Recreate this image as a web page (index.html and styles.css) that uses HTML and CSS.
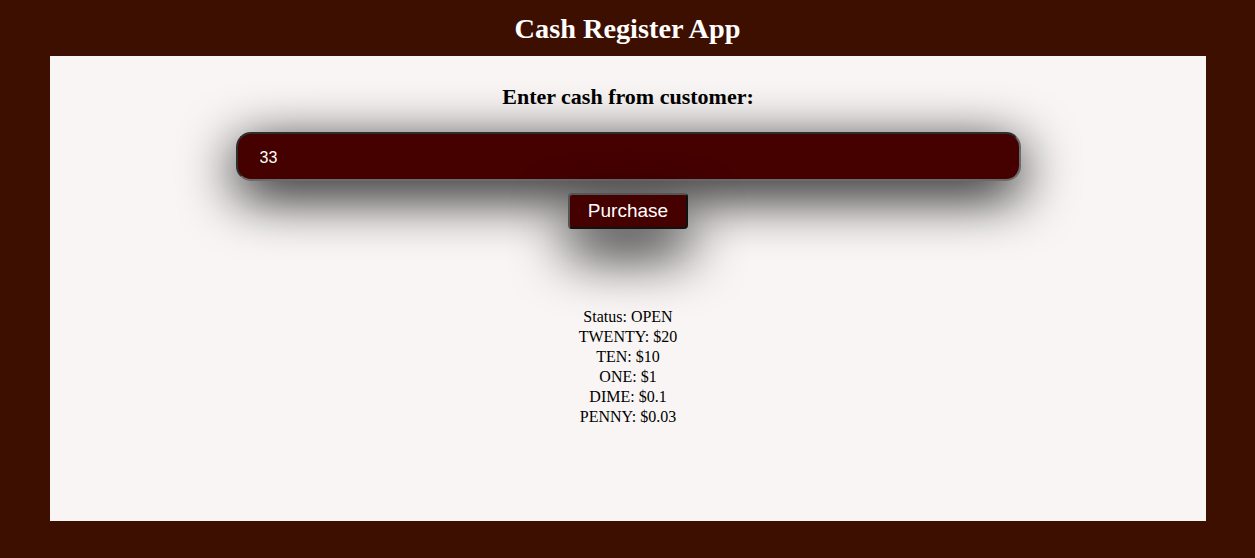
FILE: index.html
```html
<!DOCTYPE html>
<html lang="en">
<head>
<meta charset="utf-8">
<title>Cash Register App</title>
<link rel="stylesheet" href="styles.css">
</head>
<body>
<header class="header">
  <h1 class="title">Cash Register App</h1>
</header>
<main class="panel">
  <h2 class="prompt">Enter cash from customer:</h2>
  <input class="cash-input" type="text" value="33">
  <button class="purchase-btn" type="button">Purchase</button>
  <div class="change-due">
    <p>Status: OPEN</p>
    <p>TWENTY: $20</p>
    <p>TEN: $10</p>
    <p>ONE: $1</p>
    <p>DIME: $0.1</p>
    <p>PENNY: $0.03</p>
  </div>
</main>
</body>
</html>
```
FILE: styles.css
```css
html, body {
  margin: 0;
  padding: 0;
}
body {
  background: #3d0f00;
  font-family: "Liberation Serif", "Times New Roman", serif;
  height: 558px;
  overflow: hidden;
}
.header {
  height: 56px;
}
.title {
  margin: 0;
  text-align: center;
  color: #fff;
  font-size: 28.3px;
  line-height: 57px;
  font-weight: bold;
}
.panel {
  margin: 0 49px 0 50px;
  height: 465px;
  background: #f8f5f4;
  display: flex;
  flex-direction: column;
  align-items: center;
  box-sizing: border-box;
  padding-top: 28px;
}
.prompt {
  margin: 0;
  font-size: 22px;
  line-height: 26px;
  font-weight: bold;
  color: #000;
}
.cash-input {
  margin-top: 22px;
  width: 785px;
  height: 49px;
  box-sizing: border-box;
  background: #450000;
  color: #fff;
  border: 2px solid #2e2e2e;
  border-bottom-color: #6a6a6a;
  border-right-color: #6a6a6a;
  border-radius: 15px;
  padding: 2px 22px 0;
  font-family: "Liberation Sans", Arial, sans-serif;
  font-size: 16px;
  box-shadow: 0 14px 55px rgba(0, 0, 0, 1);
  outline: none;
}
.purchase-btn {
  margin-top: 12px;
  width: 120px;
  height: 36px;
  box-sizing: border-box;
  background: #450000;
  color: #fff;
  border: 2px solid #111;
  border-top-color: #555;
  border-left-color: #555;
  border-radius: 4px;
  font-family: "Liberation Sans", Arial, sans-serif;
  font-size: 19px;
  padding: 0;
  box-shadow: 0 24px 55px rgba(0, 0, 0, 1);
}
.change-due {
  margin-top: 78px;
  text-align: center;
  font-size: 16px;
  line-height: 20px;
  color: #000;
}
.change-due p {
  margin: 0;
}
```
